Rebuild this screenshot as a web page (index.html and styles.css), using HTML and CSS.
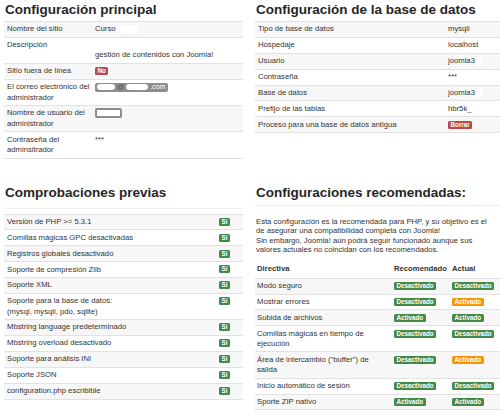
FILE: index.html
```html
<!DOCTYPE html>
<html lang="es">
<head>
<meta charset="utf-8">
<title>Instalación</title>
<link rel="stylesheet" href="styles.css">
</head>
<body>
<div class="page">
  <section class="block">
    <h2 class="title">Configuración principal</h2>
    <table class="tbl tbl-main">
      <tbody>
        <tr><td class="lbl">Nombre del sitio</td><td class="v">Curso <span class="blob blob-name"></span></td></tr>
        <tr><td class="lbl">Descripción</td><td class="v"><span class="blob blob-desc"></span><br>gestión de contenidos con Joomla!</td></tr>
        <tr><td class="lbl">Sitio fuera de línea</td><td class="v"><span class="badge badge-red">No</span></td></tr>
        <tr><td class="lbl">El correo electrónico del administrador</td><td class="v"><span class="mask"><span class="mask-blob mask-b1"></span><span class="mask-at">@</span><span class="mask-blob mask-b2"></span><span>.com</span></span></td></tr>
        <tr><td class="lbl">Nombre de usuario del administrador</td><td class="v"><span class="ubox"></span></td></tr>
        <tr><td class="lbl">Contraseña del adminsitrador</td><td class="v">***</td></tr>
      </tbody>
    </table>
  </section>

  <section class="block">
    <h2 class="title">Configuración de la base de datos</h2>
    <table class="tbl tbl-db">
      <tbody>
        <tr><td>Tipo de base de datos</td><td class="val">mysqli</td></tr>
        <tr><td>Hospedaje</td><td class="val">localhost</td></tr>
        <tr><td>Usuario</td><td class="val">joomla3<span class="blob blob-small"></span></td></tr>
        <tr><td>Contraseña</td><td class="val">***</td></tr>
        <tr><td>Base de datos</td><td class="val">joomla3<span class="blob blob-small"></span></td></tr>
        <tr><td>Prefijo de las tablas</td><td class="val">hbr5k_</td></tr>
        <tr><td>Proceso para una base de datos antigua</td><td class="val"><span class="badge badge-red">Borrar</span></td></tr>
      </tbody>
    </table>
  </section>

  <section class="block">
    <h2 class="title title-checks">Comprobaciones previas</h2>
    <table class="tbl tbl-checks">
      <thead><tr><th></th><th></th></tr></thead>
      <tbody>
        <tr><td>Versión de PHP &gt;= 5.3.1</td><td class="ok"><span class="badge badge-green">Sí</span></td></tr>
        <tr><td>Comillas mágicas GPC desactivadas</td><td class="ok"><span class="badge badge-green">Sí</span></td></tr>
        <tr><td>Registros globales desactivado</td><td class="ok"><span class="badge badge-green">Sí</span></td></tr>
        <tr><td>Soporte de compresión Zlib</td><td class="ok"><span class="badge badge-green">Sí</span></td></tr>
        <tr><td>Soporte XML</td><td class="ok"><span class="badge badge-green">Sí</span></td></tr>
        <tr><td>Soporte para la base de datos:<br>(mysql, mysqli, pdo, sqlite)</td><td class="ok"><span class="badge badge-green">Sí</span></td></tr>
        <tr><td>Mbstring language predeterminado</td><td class="ok"><span class="badge badge-green">Sí</span></td></tr>
        <tr><td>Mbstring overload desactivado</td><td class="ok"><span class="badge badge-green">Sí</span></td></tr>
        <tr><td>Soporte para análisis INI</td><td class="ok"><span class="badge badge-green">Sí</span></td></tr>
        <tr><td>Soporte JSON</td><td class="ok"><span class="badge badge-green">Sí</span></td></tr>
        <tr><td>configuration.php escribible</td><td class="ok"><span class="badge badge-green">Sí</span></td></tr>
      </tbody>
    </table>
  </section>

  <section class="block">
    <h2 class="title">Configuraciones recomendadas:</h2>
    <hr class="rule">
    <p class="intro">Esta configuración es la recomendada para PHP, y su objetivo es el<br>de asegurar una compatibilidad completa con Joomla!<br>Sin embargo, Joomla! aún podrá seguir funcionado aunque sus<br>valores actuales no coincidan con los recomendados.</p>
    <table class="tbl tbl-rec">
      <thead>
        <tr><th class="c-dir">Directiva</th><th class="c-rec">Recomendado</th><th class="c-act">Actual</th></tr>
      </thead>
      <tbody>
        <tr><td>Modo seguro</td><td><span class="badge badge-green">Desactivado</span></td><td><span class="badge badge-green">Desactivado</span></td></tr>
        <tr><td>Mostrar errores</td><td><span class="badge badge-green">Desactivado</span></td><td><span class="badge badge-orange">Activado</span></td></tr>
        <tr><td>Subida de archivos</td><td><span class="badge badge-green">Activado</span></td><td><span class="badge badge-green">Activado</span></td></tr>
        <tr><td>Comillas mágicas en tiempo de ejecución</td><td><span class="badge badge-green">Desactivado</span></td><td><span class="badge badge-green">Desactivado</span></td></tr>
        <tr><td>Área de intercambio ("buffer") de salida</td><td><span class="badge badge-green">Desactivado</span></td><td><span class="badge badge-orange">Activado</span></td></tr>
        <tr><td>Inicio automático de sesión</td><td><span class="badge badge-green">Desactivado</span></td><td><span class="badge badge-green">Desactivado</span></td></tr>
        <tr><td>Sporte ZIP nativo</td><td><span class="badge badge-green">Activado</span></td><td><span class="badge badge-green">Activado</span></td></tr>
      </tbody>
    </table>
  </section>
</div>
</body>
</html>
```
FILE: styles.css
```css
html, body {
  margin: 0;
  padding: 0;
  background: #fff;
}

body {
  font-family: "Liberation Sans", Arial, Helvetica, sans-serif;
  font-size: 7.7px;
  line-height: 10.3px;
  color: #333;
}

.page {
  display: grid;
  grid-template-columns: 239px 245px;
  column-gap: 12px;
  row-gap: 26px;
  align-items: start;
  padding: 2px 0 0 4px;
  width: 500px;
  box-sizing: border-box;
  overflow: hidden;
}

.block {
  min-width: 0;
}

.title {
  margin: 0 0 3px 1px;
  font-size: 13.5px;
  line-height: 16px;
  font-weight: bold;
  color: #262626;
  white-space: nowrap;
}

.title-checks {
  margin-bottom: 7px;
}

.tbl {
  width: 100%;
  border-collapse: collapse;
  border-spacing: 0;
  border-bottom: 1px solid #e2e2e2;
}

.tbl td,
.tbl th {
  padding: 2.3px 3px;
  text-align: left;
  vertical-align: top;
  border-top: 1px solid #e2e2e2;
}

.tbl tbody tr:nth-child(odd) td {
  background: #f7f7f7;
}

/* main config table */
.tbl-main .lbl {
  width: 86px;
  padding-right: 0;
}

.tbl-main .v {
  padding-left: 2px;
}

/* db table */
.tbl-db .val {
  width: 49px;
}

/* checks table */
.tbl-checks thead th {
  height: 5px;
  padding: 0;
  border-top: 1px solid #efefef;
}

.tbl-checks .ok {
  width: 21px;
  padding-left: 0;
}

/* recommended */
.rule {
  margin: 4px 0 11px;
  border: 0;
  border-top: 1px solid #eee;
  height: 0;
}

.intro {
  margin: 0 0 7px 1px;
  line-height: 9.5px;
  white-space: nowrap;
}

.tbl-rec thead th {
  border-top: 0;
  padding: 2.3px 2px 3.5px;
  font-weight: bold;
  color: #333;
}

.tbl-rec td {
  padding: 2.3px 2px;
}

.tbl-rec .c-dir {
  width: 129px;
}

.tbl-rec .c-rec {
  width: 54px;
}

.tbl-rec td:first-child,
.tbl-rec th:first-child {
  padding-left: 2px;
  padding-right: 6px;
}

/* badges */
.badge {
  display: inline-block;
  padding: 0 2.5px;
  font-size: 6.3px;
  line-height: 8px;
  font-weight: bold;
  color: #fff;
  border-radius: 1.5px;
  vertical-align: middle;
  white-space: nowrap;
}

.badge-green {
  background: #468847;
}

.badge-red {
  background: #b94a48;
}

.badge-orange {
  background: #f89406;
}

/* masked / blurred values */
.blob {
  display: inline-block;
  background: #fff;
  border-radius: 3px;
  vertical-align: middle;
}

.blob-name {
  width: 19px;
  height: 9px;
  margin-left: 2px;
}

.blob-desc {
  width: 1px;
  height: 8px;
}

.blob-small {
  width: 7px;
  height: 9px;
  margin-left: 1px;
}

.mask {
  display: inline-flex;
  align-items: center;
  gap: 2px;
  height: 9px;
  padding: 0 3px 0 2px;
  background: #8d8d8d;
  border-radius: 2px;
  color: #fff;
  font-size: 7px;
  vertical-align: middle;
}

.mask-blob {
  display: inline-block;
  height: 6px;
  background: #fff;
  border-radius: 3px;
}

.mask-b1 {
  width: 18px;
}

.mask-b2 {
  width: 22px;
}

.mask-at {
  color: #555;
}

.ubox {
  display: inline-block;
  width: 23px;
  height: 6px;
  border: 2px solid #8d8d8d;
  border-radius: 2px;
  background: #fff;
  vertical-align: middle;
}
```
